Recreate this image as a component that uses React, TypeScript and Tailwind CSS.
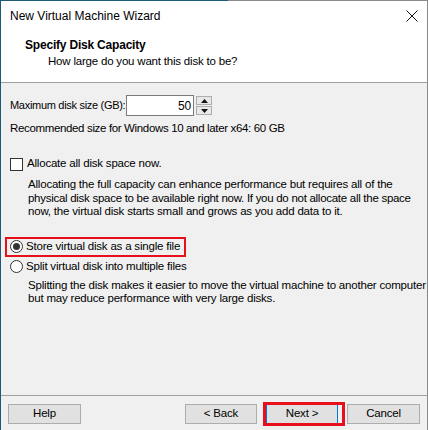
import React from 'react';

const font = { fontFamily: '"Liberation Sans", Arial, sans-serif' };

function Radio({ checked }: { checked?: boolean }) {
  return (
    <span className="w-[13px] h-[13px] rounded-full border border-[#333333] bg-white flex items-center justify-center shrink-0">
      {checked && <span className="w-[7px] h-[7px] rounded-full bg-[#333333]" />}
    </span>
  );
}

function WinButton({ label, focused, w = 'w-[73px]' }: { label: string; focused?: boolean; w?: string }) {
  return (
    <button
      className={`${w} h-[20px] bg-[#e1e1e1] text-[11.5px] tracking-[-0.2px] text-black flex items-center justify-center border ${
        focused ? 'border-[#0078d7]' : 'border-[#adadad]'
      }`}
    >
      {label}
    </button>
  );
}

export default function App() {
  return (
    <div className="w-[428px] h-[430px] flex flex-col bg-[#f0f0f0] text-black text-[11.5px] tracking-[-0.2px] overflow-hidden whitespace-nowrap" style={font}>
      {/* top edge: active window frame on the left, background window on the right */}
      <div className="flex h-px shrink-0">
        <div className="w-[228px] bg-[#1d5a7a]" />
        <div className="flex-1 bg-[#8a8a8a]" />
      </div>

      <div className="flex flex-1 min-h-0">
        <div className="w-px bg-[#1d5a7a]" />

        <div className="flex-1 flex flex-col min-w-0">
          {/* title bar */}
          <div className="h-[29px] bg-white flex items-center justify-between pl-[9px] pr-[9px] shrink-0">
            <span className="leading-none text-[12px] tracking-normal">New Virtual Machine Wizard</span>
            <svg width="12" height="12" viewBox="0 0 12 12">
              <path d="M0.5 0.5 L11.5 11.5 M11.5 0.5 L0.5 11.5" stroke="#111" strokeWidth="1" fill="none" />
            </svg>
          </div>

          {/* wizard header */}
          <div className="h-[53px] bg-white border-b border-[#a0a0a0] shrink-0 flex flex-col pt-[8px]">
            <div className="pl-[24px] font-bold leading-[14px] text-[12px]">Specify Disk Capacity</div>
            <div className="pl-[47px] leading-[14px] mt-[2px]">How large do you want this disk to be?</div>
          </div>

          {/* content */}
          <div className="flex-1 flex flex-col pl-[9px]">
            <div className="mt-[12px] h-[21px] flex items-center">
              <span className="w-[116px] shrink-0 text-[11px] tracking-[-0.3px]">Maximum disk size (GB):</span>
              <div className="w-[68px] h-[21px] bg-white border border-[#7a7a7a] flex items-center justify-end pr-[2px] text-[12px]">
                50
              </div>
              <div className="ml-[2px] w-[16px] h-[19px] flex flex-col gap-px">
                <div className="flex-1 bg-[#e8e8e8] border border-[#adadad] flex items-center justify-center">
                  <svg width="7" height="4" viewBox="0 0 7 4"><path d="M3.5 0 L7 4 L0 4 Z" fill="#111" /></svg>
                </div>
                <div className="flex-1 bg-[#e8e8e8] border border-[#adadad] flex items-center justify-center">
                  <svg width="7" height="4" viewBox="0 0 7 4"><path d="M0 0 L7 0 L3.5 4 Z" fill="#111" /></svg>
                </div>
              </div>
            </div>

            <div className="mt-[5px] leading-[14px] tracking-[-0.35px]">Recommended size for Windows 10 and later x64: 60 GB</div>

            <div className="mt-[22px] h-[14px] flex items-center gap-[4px]">
              <span className="w-[13px] h-[13px] border border-[#333333] bg-white shrink-0" />
              <span>Allocate all disk space now.</span>
            </div>

            <p className="mt-[7px] pl-[18px] leading-[13.5px]">
              Allocating the full capacity can enhance performance but requires all of the
              <br />
              <span className="tracking-[-0.28px]">physical disk space to be available right now. If you do not allocate all the space</span>
              <br />
              now, the virtual disk starts small and grows as you add data to it.
            </p>

            <div className="mt-[18px] -ml-[5px] self-start h-[20px] border-2 border-[#e8101a] flex items-center gap-[3px] pl-[3px] pr-[4px]">
              <Radio checked />
              <span>Store virtual disk as a single file</span>
            </div>

            <div className="mt-[3px] h-[14px] flex items-center gap-[3px]">
              <Radio />
              <span>Split virtual disk into multiple files</span>
            </div>

            <p className="mt-[5px] pl-[18px] leading-[13.5px]">
              Splitting the disk makes it easier to move the virtual machine to another computer
              <br />
              but may reduce performance with very large disks.
            </p>
          </div>

          {/* footer */}
          <div className="h-[35px] border-t border-[#a0a0a0] shrink-0 flex items-start pt-[8px] pl-[7px] pr-[7px]">
            <WinButton label="Help" />
            <div className="flex-1" />
            <WinButton label="< Back" w="w-[72px]" />
            <div className="ml-[9px] relative">
              <WinButton label="Next >" focused w="w-[72px]" />
              <span className="absolute -left-[3px] -right-[7px] -top-[2px] -bottom-[2px] border-[3px] border-[#e8101a] pointer-events-none" />
            </div>
            <div className="ml-[9px]">
              <WinButton label="Cancel" />
            </div>
          </div>
        </div>

        <div className="w-px bg-[#8a8a8a]" />
      </div>
    </div>
  );
}
